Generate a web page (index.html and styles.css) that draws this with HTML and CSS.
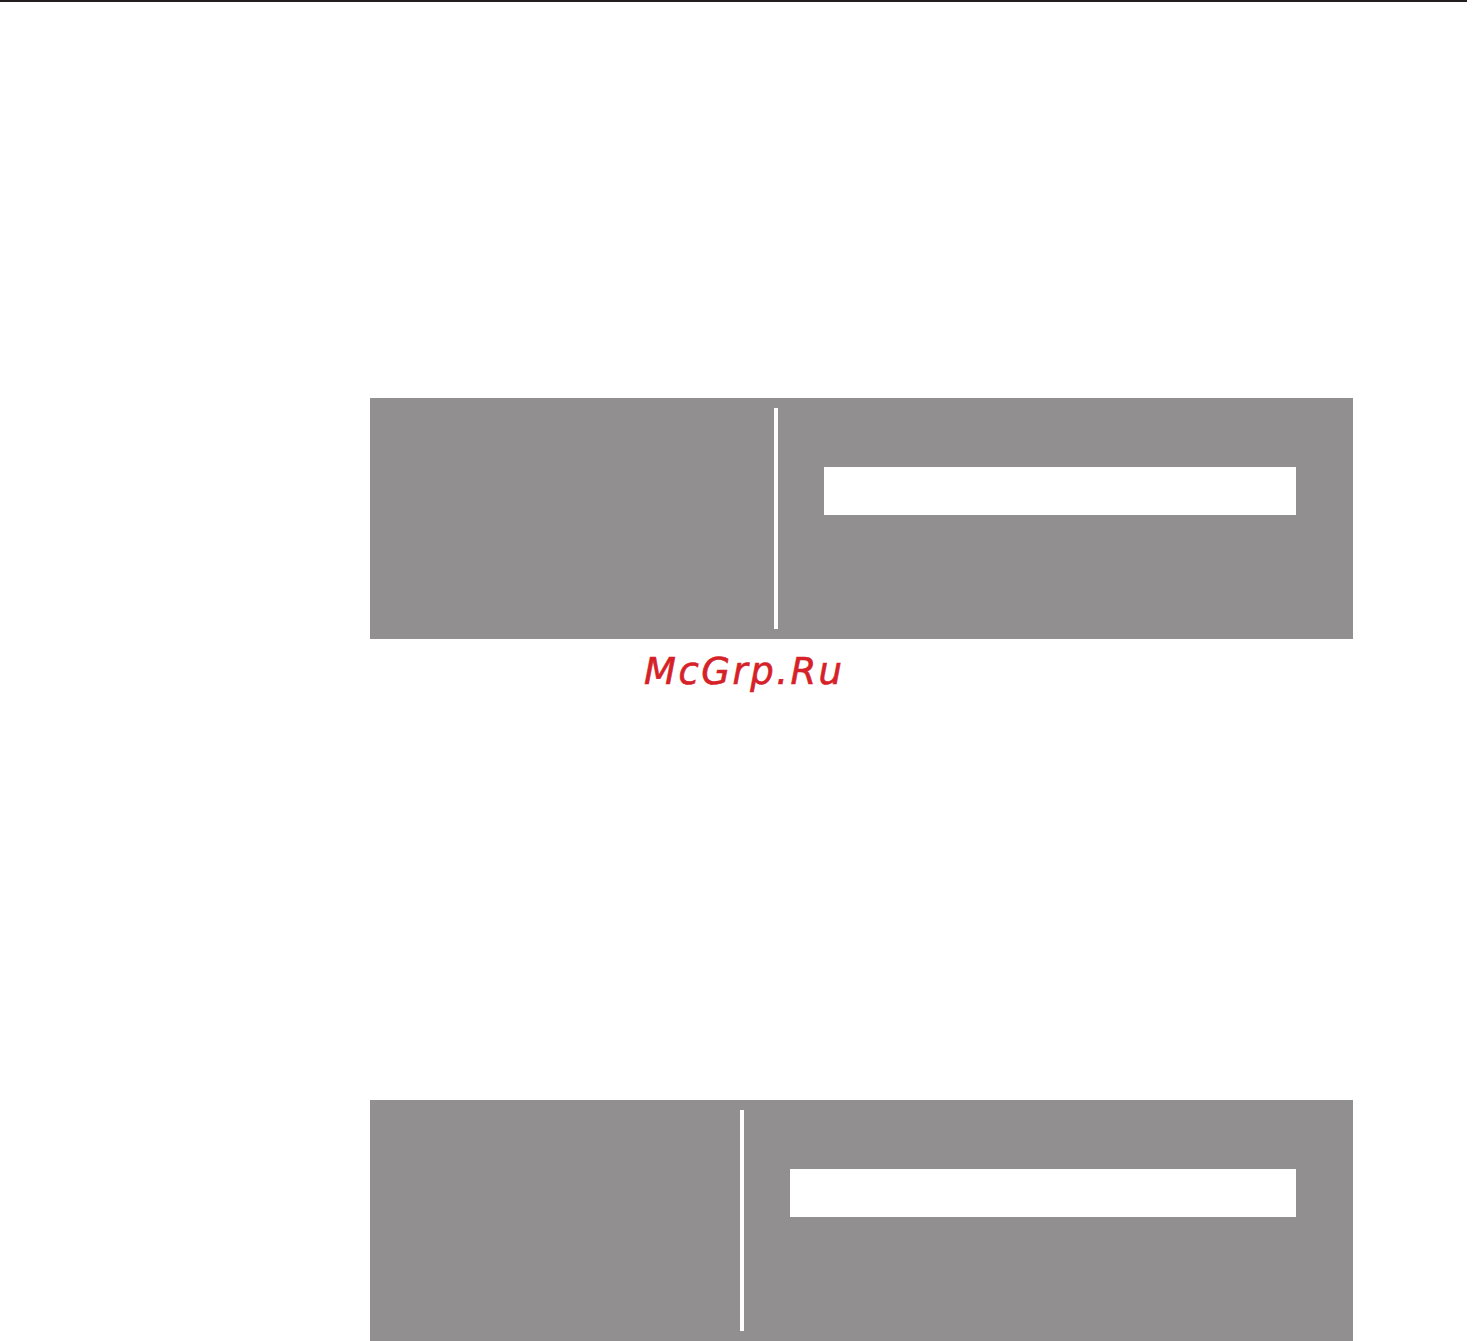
FILE: index.html
```html
<!DOCTYPE html>
<html lang="en">
<head>
    <meta charset="UTF-8">
    <meta name="viewport" content="width=device-width, initial-scale=1.0">
    <title>McGrp.Ru</title>
    <link rel="stylesheet" href="styles.css">
</head>
<body>
    <div class="top-rule"></div>

    <main>
        <div class="panel panel-first">
            <div class="panel-left"></div>
            <div class="panel-divider"></div>
            <div class="panel-right">
                <div class="panel-field"></div>
            </div>
        </div>

        <p class="watermark">McGrp.Ru</p>

        <div class="panel panel-second">
            <div class="panel-left"></div>
            <div class="panel-divider"></div>
            <div class="panel-right">
                <div class="panel-field"></div>
            </div>
        </div>
    </main>
</body>
</html>
```

FILE: styles.css
```css
body {
    font-family: "DejaVu Sans", sans-serif;
    background-color: #ffffff;
    margin: 0;
    padding: 0;
    overflow: hidden;
}
.top-rule {
    width: 1467px;
    height: 2px;
    background-color: #231f20;
}
main {
    padding-top: 396px;
    padding-left: 370px;
}
.panel {
    width: 983px;
    height: 241px;
    background-color: #918f90;
    display: flex;
    padding: 10px 0;
    box-sizing: border-box;
}
.panel-divider {
    width: 4px;
    background-color: #ffffff;
}
.panel-right {
    padding-top: 59px;
    padding-left: 46px;
}
.panel-field {
    height: 48px;
    background-color: #ffffff;
}
.panel-first .panel-left {
    width: 404px;
}
.panel-first .panel-field {
    width: 472px;
}
.panel-second {
    margin-top: 407px;
}
.panel-second .panel-left {
    width: 370px;
}
.panel-second .panel-field {
    width: 506px;
}
.watermark {
    margin: 11px 0 0 274px;
    font-size: 37px;
    font-style: italic;
    letter-spacing: 2.5px;
    line-height: normal;
    color: #d52127;
    -webkit-text-stroke: 0.6px #d52127;
}
```
